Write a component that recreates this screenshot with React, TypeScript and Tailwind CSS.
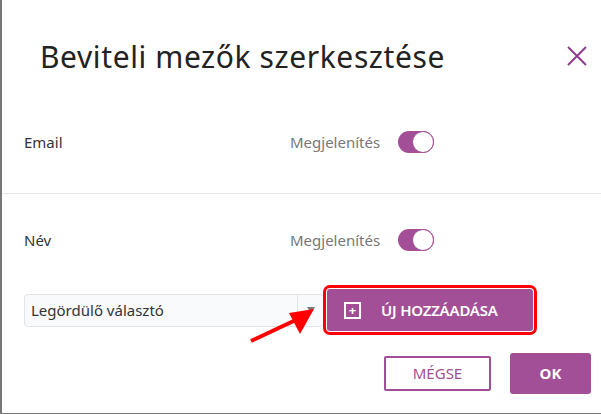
import { useState } from 'react'

const purple = 'bg-[#a24f97]'

function Toggle({ on }: { on: boolean }) {
  return (
    <div className={`relative h-[22px] w-[36px] rounded-full ${on ? purple : 'bg-gray-300'}`}>
      <div className="absolute right-0 top-0 h-[22px] w-[22px] rounded-full border border-[#a24f97] bg-white" />
    </div>
  )
}

function FieldRow({ label }: { label: string }) {
  return (
    <div className="flex h-[22px] items-center">
      <span className="w-[288px] pl-[22px] text-[15px] text-[#333]">{label}</span>
      <span className="w-[108px] text-[15px] text-[#777]">Megjelenítés</span>
      <Toggle on />
    </div>
  )
}

export default function App() {
  const [value] = useState('Legördülő választó')

  return (
    <div
      className="relative h-[414px] w-[601px] overflow-hidden border-b border-l-2 border-[#777] bg-white"
      style={{ fontFamily: '"Noto Sans", "Open Sans", sans-serif' }}
    >
      {/* header */}
      <div className="flex h-[131px] items-start justify-between pl-[38px] pr-[14px] pt-[36px]">
        <h1 className="text-[30px] leading-[42px] tracking-[0.6px] text-[#222]">Beviteli mezők szerkesztése</h1>
        <button className="mt-[10px] p-0">
          <svg width="20" height="20" viewBox="0 0 20 20">
            <path d="M1 1 L19 19 M19 1 L1 19" stroke="#8e3d8e" strokeWidth="2" />
          </svg>
        </button>
      </div>

      <FieldRow label="Email" />

      <div className="mt-[40px] h-px bg-[#e6e6e6]" />

      <div className="pt-[35px]">
        <FieldRow label="Név" />
      </div>

      {/* dropdown + add */}
      <div className="mt-[34px] flex items-center pl-[22px]">
        <div className="flex h-[33px] w-[300px] items-center rounded-sm border border-[#e2e4e6] bg-[#f9fafb]">
          <span className="flex-1 pl-[6px] text-[15px] text-[#333]">{value}</span>
          <div className="flex h-full w-[26px] items-center justify-center border-l border-[#e2e4e6]">
            <svg width="8" height="6" viewBox="0 0 8 6">
              <path d="M0 0 H8 L4 6 Z" fill="#777" />
            </svg>
          </div>
        </div>
        <div className="-ml-[1px] rounded-[7px] border-[3px] border-[#f00] p-[1px]">
          <button
            className={`flex h-[42px] w-[206px] items-center rounded-[3px] ${purple} pl-[17px] text-[15px] font-semibold text-white`}
          >
            <span className="flex h-[17px] w-[17px] items-center justify-center border-2 border-white text-[13px] font-bold leading-none">
              +
            </span>
            <span className="ml-[20px] tracking-[-0.2px]">ÚJ HOZZÁADÁSA</span>
          </button>
        </div>
      </div>

      {/* footer */}
      <div className="mt-[18px] flex items-center justify-end gap-[19px] pr-[10px]">
        <button className="h-[35px] w-[107px] rounded-[2px] border-2 border-[#a24f97] text-[15px] text-[#a24f97]">
          MÉGSE
        </button>
        <button className={`h-[41px] w-[81px] rounded-[3px] ${purple} text-[15px] font-bold text-white`}>
          OK
        </button>
      </div>

      {/* annotation arrow */}
      <svg className="pointer-events-none absolute left-0 top-0" width="601" height="414">
        <path d="M249 341 L298 318" stroke="#f00" strokeWidth="4" />
        <path d="M312 309 L287 313 L298 334 Z" fill="#f00" />
      </svg>
    </div>
  )
}
